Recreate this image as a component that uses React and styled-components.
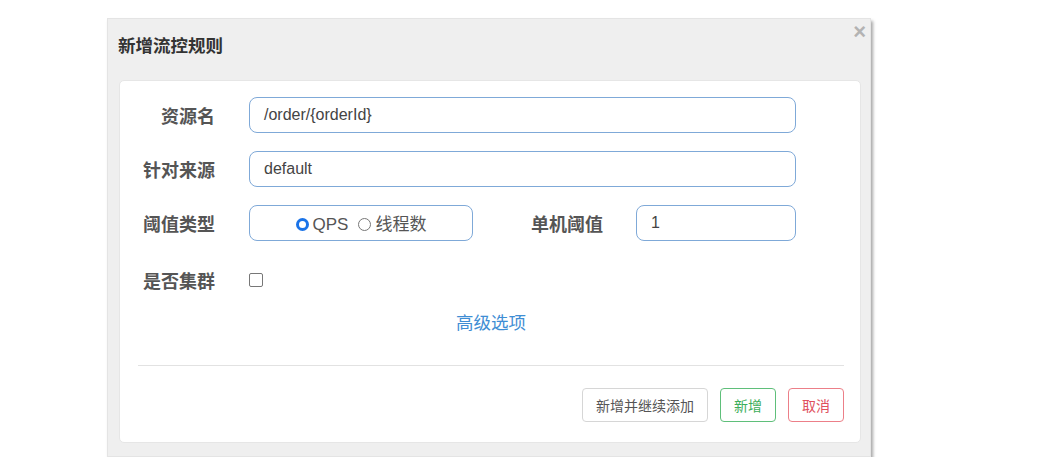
import React from "react";
import styled, { createGlobalStyle } from "styled-components";

const Global = createGlobalStyle`
  body {
    margin: 0;
    background: #fff;
    font-family: "Liberation Sans", Arial, "Noto Sans CJK SC", sans-serif;
  }
`;

const Page = styled.div`
  padding: 18px 0 0 107px;
`;

const Dialog = styled.div`
  position: relative;
  width: 764px;
  height: 439px;
  box-sizing: border-box;
  background: #efefef;
  border: 1px solid #e4e4e4;
  box-shadow: 2px 3px 3px rgba(0, 0, 0, 0.35);
  display: flex;
  flex-direction: column;
`;

const Header = styled.div`
  height: 61px;
  box-sizing: border-box;
  padding: 13px 0 0 10px;
  font-size: 17.5px;
  font-weight: bold;
  color: #333;
`;

const Close = styled.span`
  position: absolute;
  top: 2px;
  right: 4px;
  font-size: 22px;
  line-height: 22px;
  color: #b3b3b3;
  font-weight: bold;
`;

const Panel = styled.div`
  margin: 0 9px 13px 11px;
  flex: 1;
  background: #fff;
  border: 1px solid #e6e6e6;
  border-radius: 5px;
  padding: 16px 16px 0 0;
  display: flex;
  flex-direction: column;
`;

const Row = styled.div`
  display: flex;
  align-items: center;
  height: ${(p) => p.h || 36}px;
  margin-bottom: 18px;
`;

const Label = styled.label`
  width: ${(p) => p.w || 95}px;
  text-align: right;
  margin-right: ${(p) => p.gap || 34}px;
  font-size: 18px;
  font-weight: bold;
  color: #555;
  font-family: "Noto Sans CJK SC", sans-serif;
`;

const Input = styled.div`
  width: ${(p) => p.w}px;
  height: 36px;
  box-sizing: border-box;
  border: 1px solid #7fa9d8;
  border-radius: 8px;
  display: flex;
  align-items: center;
  justify-content: ${(p) => (p.center ? "center" : "flex-start")};
  padding-left: ${(p) => (p.center ? 0 : 14)}px;
  font-size: 16px;
  color: #444;
`;

const Radio = styled.span`
  display: inline-flex;
  align-items: center;
  gap: 4px;
  margin: 4px 5px 0;
  font-size: 17px;
  line-height: 20px;
  color: #555;
  font-family: "Liberation Sans", "Noto Sans CJK SC", sans-serif;
`;

const Dot = styled.span`
  width: 13px;
  height: 13px;
  margin-top: -1px;
  box-sizing: border-box;
  border-radius: 50%;
  border: ${(p) => (p.on ? "3.5px solid #1a73e8" : "1px solid #777")};
  background: #fff;
`;

const Check = styled.span`
  width: 12px;
  height: 12px;
  border: 1px solid #777;
  border-radius: 2px;
`;

const Link = styled.div`
  text-align: center;
  margin: -10px 0 0 18px;
  font-size: 17.5px;
  color: #3f8ed4;
  font-family: "Noto Sans CJK SC", sans-serif;
`;

const Rule = styled.hr`
  margin: 31px 0 0 18px;
  border: 0;
  border-top: 1px solid #e2e2e2;
`;

const Footer = styled.div`
  display: flex;
  justify-content: flex-end;
  gap: 12px;
  margin-top: 22px;
`;

const colors = { plain: "#555", green: "#3cae5a", red: "#e0505d" };
const borders = { plain: "#d6d6d6", green: "#5fbf7a", red: "#ec7f88" };

const Btn = styled.button`
  height: 34px;
  padding: 0 13px;
  background: #fff;
  border: 1px solid ${(p) => borders[p.kind]};
  border-radius: 4px;
  color: ${(p) => colors[p.kind]};
  font-size: 14px;
  font-family: "Noto Sans CJK SC", sans-serif;
`;

export default function App() {
  return (
    <Page>
      <Global />
      <Dialog>
        <Header>新增流控规则</Header>
        <Close>×</Close>
        <Panel>
          <Row>
            <Label>资源名</Label>
            <Input w={547}>/order/{"{orderId}"}</Input>
          </Row>
          <Row>
            <Label>针对来源</Label>
            <Input w={547}>default</Input>
          </Row>
          <Row>
            <Label>阈值类型</Label>
            <Input w={224} center>
              <Radio><Dot on />QPS</Radio>
              <Radio><Dot />线程数</Radio>
            </Input>
            <Label w={130} gap={33}>单机阈值</Label>
            <Input w={160}>1</Input>
          </Row>
          <Row h={42}>
            <Label>是否集群</Label>
            <Check />
          </Row>
          <Link>高级选项</Link>
          <Rule />
          <Footer>
            <Btn kind="plain">新增并继续添加</Btn>
            <Btn kind="green">新增</Btn>
            <Btn kind="red">取消</Btn>
          </Footer>
        </Panel>
      </Dialog>
    </Page>
  );
}
